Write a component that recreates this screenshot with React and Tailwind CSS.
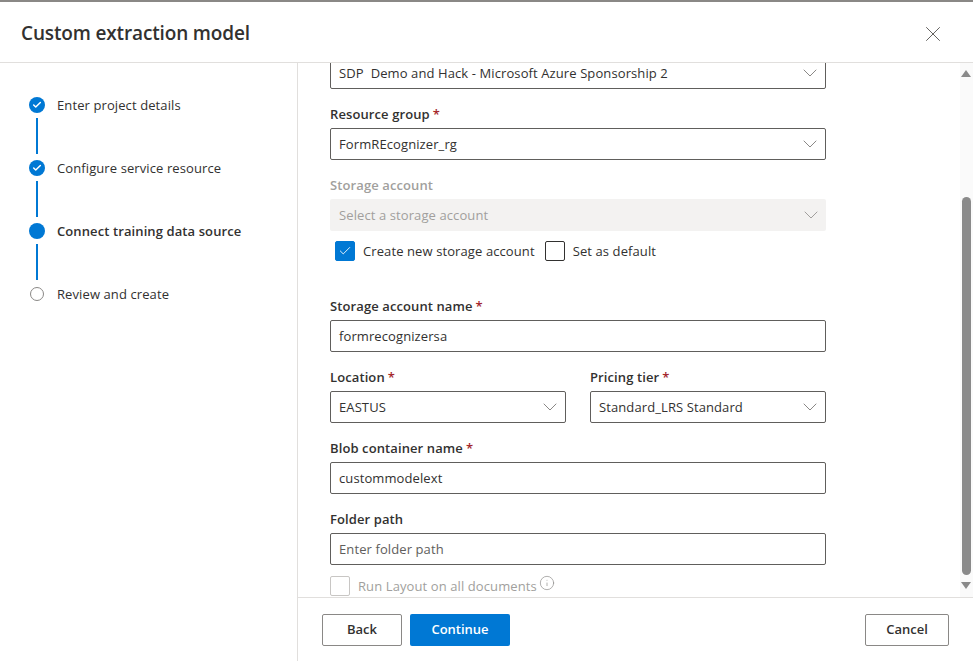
import { ChevronDown, X, Check, Info } from 'lucide-react'

const font = "font-['Open_Sans','Noto_Sans',sans-serif]"

function Step({ label, state, last }) {
  return (
    <div className="flex h-[63px] items-start">
      <div className="flex w-4 flex-col items-center">
        {state === 'done' && (
          <div className="flex h-4 w-4 items-center justify-center rounded-full bg-[#0078d4]">
            <Check size={10} strokeWidth={3.5} className="text-white" />
          </div>
        )}
        {state === 'current' && <div className="h-4 w-4 rounded-full bg-[#0078d4]" />}
        {state === 'todo' && <div className="mt-px h-[14px] w-[14px] rounded-full border border-[#8a8886] bg-white" />}
        {!last && <div className="mt-[5px] h-[36px] w-[2px] bg-[#0078d4]" />}
      </div>
      <span className={`ml-3 text-[13px] leading-4 tracking-[0.1px] text-[#323130] ${state === 'current' ? 'font-semibold' : ''}`}>
        {label}
      </span>
    </div>
  )
}

function Label({ text, required, disabled, className = 'mt-[15px]' }) {
  return (
    <div className={`mb-1 h-5 text-[13px] font-semibold leading-5 tracking-[0.1px] ${disabled ? 'text-[#a19f9d]' : 'text-[#323130]'} ${className}`}>
      {text}
      {required && <span className="ml-[3px] text-[#a4262c]">*</span>}
    </div>
  )
}

function Select({ value, disabled }) {
  return (
    <div className={`flex h-8 items-center justify-between rounded-[2px] pr-[3px] text-[13px] tracking-[0.1px] ${disabled ? 'bg-[#f3f2f1] pl-[9px] text-[#a19f9d]' : 'border border-[#605e5c] bg-white pl-2 text-[#323130]'}`}>
      <span className="whitespace-pre pt-px">{value}</span>
      <ChevronDown size={24} strokeWidth={1} className={disabled ? 'text-[#a19f9d]' : 'text-[#8a8886]'} />
    </div>
  )
}

function Input({ value, placeholder }) {
  return (
    <div className={`flex h-8 items-center rounded-[2px] border border-[#605e5c] bg-white pl-2 text-[13px] tracking-[0.1px] ${placeholder ? 'text-[#605e5c]' : 'text-[#323130]'}`}>
      <span className="pt-px">{value || placeholder}</span>
    </div>
  )
}

function Checkbox({ label, checked, disabled }) {
  return (
    <div className="flex items-center">
      <div className={`flex h-5 w-5 items-center justify-center rounded-[2px] border ${checked ? 'border-[#0078d4] bg-[#0078d4]' : disabled ? 'border-[#c8c6c4] bg-white' : 'border-[#323130] bg-white'}`}>
        {checked && <Check size={14} strokeWidth={1.5} className="text-white" />}
      </div>
      <span className={`ml-2 text-[13px] leading-5 tracking-[0.1px] ${disabled ? 'text-[#a19f9d]' : 'text-[#323130]'}`}>{label}</span>
    </div>
  )
}

export default function App() {
  return (
    <div className={`flex h-[661px] w-[973px] flex-col overflow-hidden border-t-2 border-[#8a8886] bg-white ${font}`}>
      <div className="flex h-[61px] shrink-0 items-center justify-between border-b border-[#e1dfdd] pl-[21px] pr-[27px] pt-[2px]">
        <h1 className="text-[19px] font-semibold tracking-[-0.15px] text-[#323130]">Custom extraction model</h1>
        <X size={26} strokeWidth={0.9} className="mt-[2px] text-[#605e5c]" />
      </div>

      <div className="flex min-h-0 flex-1">
        <div className="w-[298px] shrink-0 border-r border-[#e1dfdd] pl-[29px] pt-[34px]">
          <Step label="Enter project details" state="done" />
          <Step label="Configure service resource" state="done" />
          <Step label="Connect training data source" state="current" />
          <Step label="Review and create" state="todo" last />
        </div>

        <div className="flex min-w-0 flex-1 flex-col">
          <div className="flex min-h-0 flex-1">
            <div className="min-w-0 flex-1 overflow-hidden pl-8">
              <div className="-mt-[6px] w-[496px]">
                <Select value="SDP  Demo and Hack - Microsoft Azure Sponsorship 2" />
                <Label text="Resource group" required />
                <Select value="FormREcognizer_rg" />
                <Label text="Storage account" disabled />
                <Select value="Select a storage account" disabled />
                <div className="mt-[10px] flex gap-[10px] pl-[5px]">
                  <Checkbox label="Create new storage account" checked />
                  <Checkbox label="Set as default" />
                </div>
                <Label text="Storage account name" required className="mt-[35px]" />
                <Input value="formrecognizersa" />
                <div className="grid grid-cols-2 gap-x-6">
                  <div>
                    <Label text="Location" required />
                    <Select value="EASTUS" />
                  </div>
                  <div>
                    <Label text="Pricing tier" required />
                    <Select value="Standard_LRS Standard" />
                  </div>
                </div>
                <Label text="Blob container name" required />
                <Input value="custommodelext" />
                <Label text="Folder path" />
                <Input placeholder="Enter folder path" />
                <div className="mt-[11px] flex items-center">
                  <Checkbox label="Run Layout on all documents" disabled />
                  <Info size={16} strokeWidth={1} className="-mt-[7px] ml-[2px] text-[#8a8886]" />
                </div>
              </div>
            </div>

            <div className="flex w-[13px] shrink-0 flex-col items-center bg-[#fafafa] pr-[1px]">
              <div className="mt-[7px] h-0 w-0 border-x-[5px] border-b-[7px] border-x-transparent border-b-[#8a8a8a]" />
              <div className="mt-[120px] h-[378px] w-[9px] rounded-full bg-[#8a8a8a]" />
              <div className="mt-[7px] h-0 w-0 border-x-[5px] border-t-[7px] border-x-transparent border-t-[#8a8a8a]" />
            </div>
          </div>

          <div className="flex h-[64px] shrink-0 items-center justify-between border-t border-[#e1dfdd] pl-6 pr-6">
            <div className="flex gap-2">
              <button className="h-8 w-20 rounded-[2px] border border-[#8a8886] bg-white text-[13px] font-semibold text-[#323130]">Back</button>
              <button className="h-8 w-[100px] rounded-[2px] bg-[#0078d4] text-[13px] font-semibold text-white">Continue</button>
            </div>
            <button className="h-8 w-[84px] rounded-[2px] border border-[#8a8886] bg-white text-[13px] font-semibold text-[#323130]">Cancel</button>
          </div>
        </div>
      </div>
    </div>
  )
}
